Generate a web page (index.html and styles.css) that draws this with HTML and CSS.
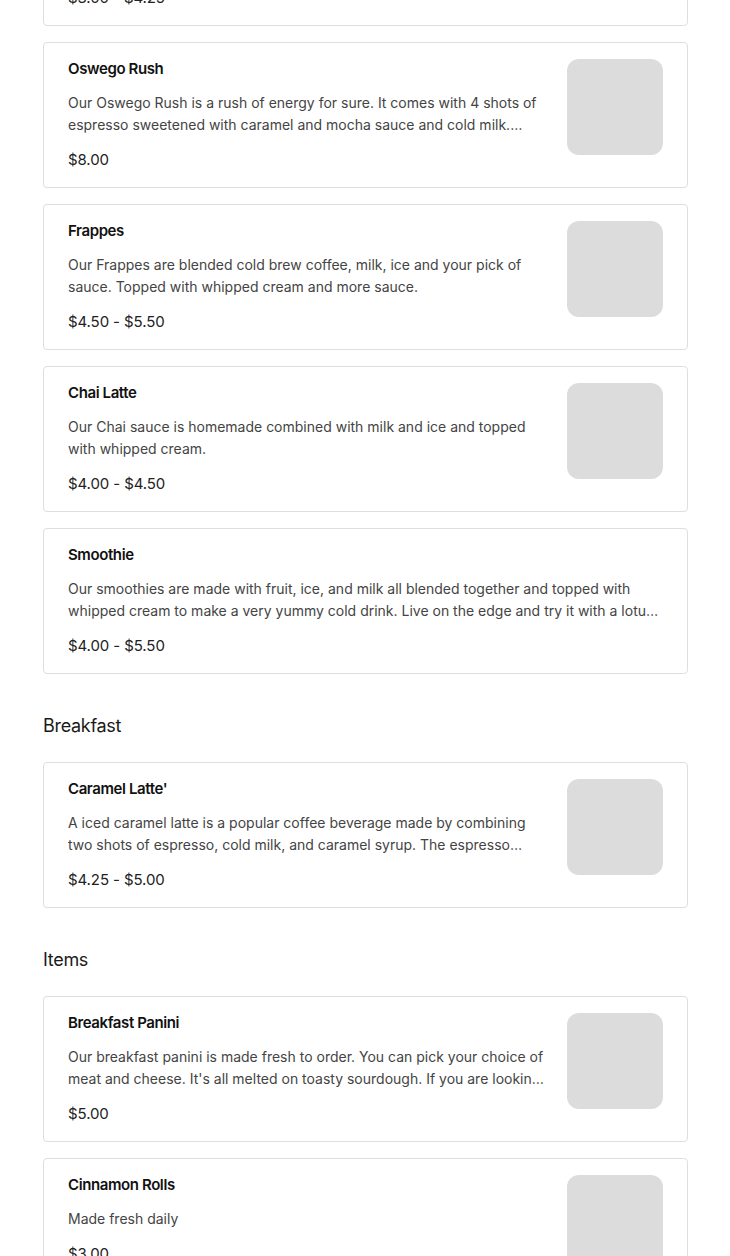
FILE: index.html
```html
<!DOCTYPE html>
<html lang="en">
<head>
<meta charset="utf-8">
<title>Menu</title>
<link rel="stylesheet" href="styles.css">
</head>
<body>
<main class="menu">
  <section class="section">
    <ul class="items">
      <li class="card">
        <div class="info">
          <h3 class="name">Iced Americano</h3>
          <p class="desc">Our iced americano is made with shots of espresso poured over cold water and ice, for a bold and refreshing pick-me-up any time of day.</p>
          <p class="price">$3.00 - $4.25</p>
        </div>
        <div class="thumb"></div>
      </li>
      <li class="card">
        <div class="info">
          <h3 class="name">Oswego Rush</h3>
          <p class="desc">Our Oswego Rush is a rush of energy for sure. It comes with 4 shots of espresso sweetened with caramel and mocha sauce and cold milk. Perfect for a long day of classes.</p>
          <p class="price">$8.00</p>
        </div>
        <div class="thumb"></div>
      </li>
      <li class="card">
        <div class="info">
          <h3 class="name">Frappes</h3>
          <p class="desc">Our Frappes are blended cold brew coffee, milk, ice and your pick of sauce. Topped with whipped cream and more sauce.</p>
          <p class="price">$4.50 - $5.50</p>
        </div>
        <div class="thumb"></div>
      </li>
      <li class="card">
        <div class="info">
          <h3 class="name">Chai Latte</h3>
          <p class="desc">Our Chai sauce is homemade combined with milk and ice and topped with whipped cream.</p>
          <p class="price">$4.00 - $4.50</p>
        </div>
        <div class="thumb"></div>
      </li>
      <li class="card">
        <div class="info">
          <h3 class="name">Smoothie</h3>
          <p class="desc">Our smoothies are made with fruit, ice, and milk all blended together and topped with whipped cream to make a very yummy cold drink. Live on the edge and try it with a lotus energy shot.</p>
          <p class="price">$4.00 - $5.50</p>
        </div>
      </li>
    </ul>
  </section>

  <section class="section">
    <h2 class="section-title">Breakfast</h2>
    <ul class="items">
      <li class="card">
        <div class="info">
          <h3 class="name">Caramel Latte'</h3>
          <p class="desc">A iced caramel latte is a popular coffee beverage made by combining two shots of espresso, cold milk, and caramel syrup. The espresso provides a bold flavor.</p>
          <p class="price">$4.25 - $5.00</p>
        </div>
        <div class="thumb"></div>
      </li>
    </ul>
  </section>

  <section class="section">
    <h2 class="section-title">Items</h2>
    <ul class="items">
      <li class="card">
        <div class="info">
          <h3 class="name">Breakfast Panini</h3>
          <p class="desc">Our breakfast panini is made fresh to order. You can pick your choice of meat and cheese. It's all melted on toasty sourdough. If you are looking for a filling breakfast, this is it.</p>
          <p class="price">$5.00</p>
        </div>
        <div class="thumb"></div>
      </li>
      <li class="card">
        <div class="info">
          <h3 class="name">Cinnamon Rolls</h3>
          <p class="desc">Made fresh daily</p>
          <p class="price">$3.00</p>
        </div>
        <div class="thumb"></div>
      </li>
    </ul>
  </section>
</main>
</body>
</html>
```

FILE: styles.css
```css
* { box-sizing: border-box; }

html, body {
  margin: 0;
  padding: 0;
  background: #ffffff;
}

body {
  font-family: Inter, "Noto Sans", "Liberation Sans", sans-serif;
  color: #111;
  overflow: hidden;
}

.menu {
  margin-top: -120px;
  padding: 0 42px 0 43px;
  display: flex;
  flex-direction: column;
  gap: 38px;
}

.section-title {
  margin: 0 0 22px;
  font-size: 18px;
  line-height: 28px;
  font-weight: 400;
  letter-spacing: -0.3px;
  color: #1a1a1a;
}

.items {
  list-style: none;
  margin: 0;
  padding: 0;
  display: flex;
  flex-direction: column;
  gap: 16px;
}

.card {
  display: flex;
  align-items: flex-start;
  gap: 19px;
  padding: 16px 24px;
  border: 1px solid #dedede;
  border-radius: 4px;
  background: #fff;
}

.info {
  flex: 1;
  min-width: 0;
}

.name {
  margin: 0 0 13px;
  font-size: 15px;
  line-height: 20px;
  font-weight: 600;
  letter-spacing: -0.4px;
  color: #111;
}

.desc {
  margin: 0 0 13px;
  font-size: 14px;
  line-height: 22px;
  color: #444;
  display: -webkit-box;
  -webkit-line-clamp: 2;
  -webkit-box-orient: vertical;
  overflow: hidden;
}

.price {
  margin: 0;
  font-size: 15px;
  line-height: 22px;
  letter-spacing: -0.1px;
  color: #222;
}

.thumb {
  flex: none;
  width: 96px;
  height: 96px;
  border-radius: 12px;
  background: #dcdcdc;
}
```
